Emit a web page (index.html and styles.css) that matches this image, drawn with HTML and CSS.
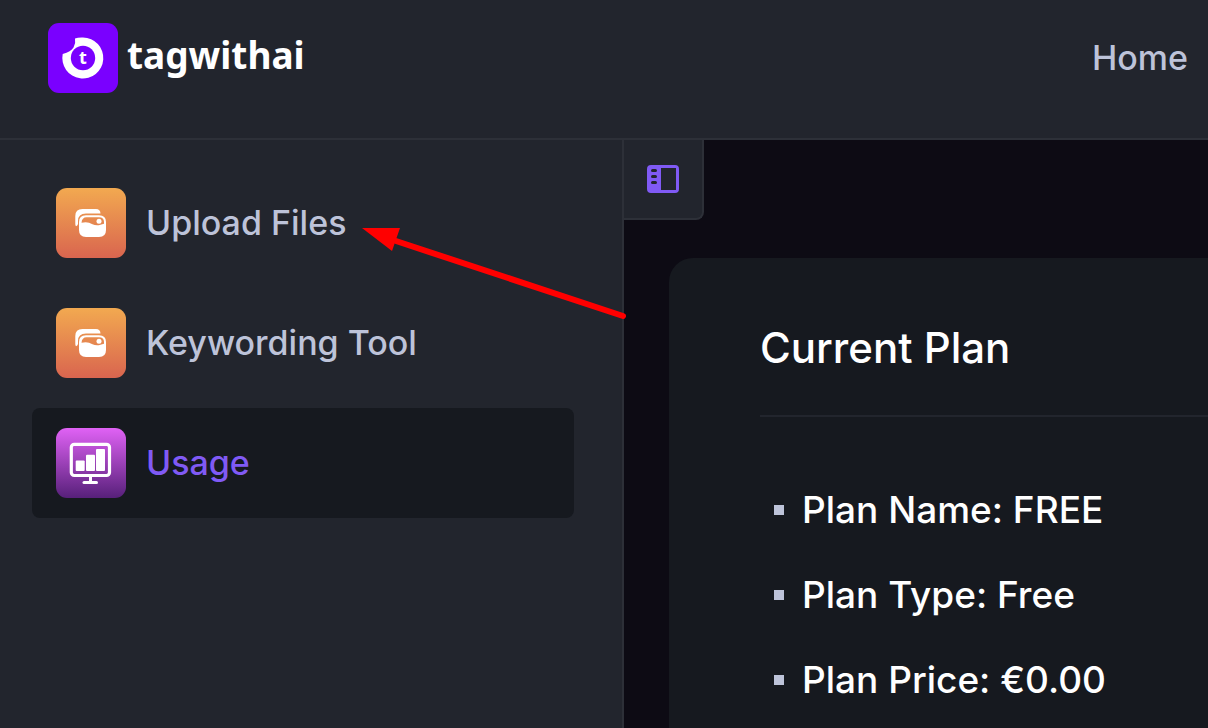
FILE: index.html
```html
<!DOCTYPE html>
<html lang="en">
  <head>
    <meta charset="utf-8" />
    <meta name="viewport" content="width=device-width, initial-scale=1" />
    <title>tagwithai - Usage</title>
    <link rel="stylesheet" href="styles.css">
  </head>
  <body>
    <header class="header">
      <a href="#" class="brand">
        <svg class="brand-logo" viewBox="0 0 70 70">
          <rect width="70" height="70" rx="11" fill="#7a00ff" />
          <path fill="#fff" d="M27 15.500Q30 14.300 35 14.500A20.500 20.500 0 1 1 14.700 31Q23 28.500 25.500 24.500Q28 20 27 15.500Z" />
          <circle cx="35" cy="35" r="12.200" fill="#7a00ff" />
          <text class="brand-letter" x="35" y="41" text-anchor="middle">t</text>
        </svg>
        <span class="brand-name">tagwithai</span>
      </a>
      <nav>
        <a href="#" class="nav-link">Home</a>
      </nav>
    </header>

    <div class="layout">
      <aside class="sidebar">
        <a href="#" class="menu-item">
          <svg class="menu-icon" viewBox="0 0 70 70">
            <defs>
              <linearGradient id="orange" x1="0" y1="0" x2="0" y2="1">
                <stop offset="0" stop-color="#f2a950" />
                <stop offset="1" stop-color="#d9654f" />
              </linearGradient>
            </defs>
            <rect width="70" height="70" rx="11" fill="url(#orange)" />
            <path fill="#fff" d="M20 38.200Q19.300 37.500 19.300 36V28Q19.300 21 26.500 21H40Q44.300 21 44.500 25.500H30Q22 25.500 22 33V36Q21.500 38 20 38.200Z" />
            <path fill="#fff" fill-rule="evenodd" d="M30 27.200H43Q50 27.200 50 34V42Q50 49 43 49H30Q23 49 23 42V34Q23 27.200 30 27.200ZM25.500 34.800C30 33.500 33 34.300 36.500 36.300C40 38 44 37.300 48 35.800V34Q48 29.300 43 29.300H30.500Q26 29.300 25.500 34.800Z" />
            <circle cx="43" cy="33.300" r="2.500" fill="#fff" />
          </svg>
          <span>Upload Files</span>
        </a>
        <a href="#" class="menu-item">
          <svg class="menu-icon" viewBox="0 0 70 70">
            <rect width="70" height="70" rx="11" fill="url(#orange)" />
            <path fill="#fff" d="M20 38.200Q19.300 37.500 19.300 36V28Q19.300 21 26.500 21H40Q44.300 21 44.500 25.500H30Q22 25.500 22 33V36Q21.500 38 20 38.200Z" />
            <path fill="#fff" fill-rule="evenodd" d="M30 27.200H43Q50 27.200 50 34V42Q50 49 43 49H30Q23 49 23 42V34Q23 27.200 30 27.200ZM25.500 34.800C30 33.500 33 34.300 36.500 36.300C40 38 44 37.300 48 35.800V34Q48 29.300 43 29.300H30.500Q26 29.300 25.500 34.800Z" />
            <circle cx="43" cy="33.300" r="2.500" fill="#fff" />
          </svg>
          <span>Keywording Tool</span>
        </a>
        <a href="#" class="menu-item active">
          <svg class="menu-icon" viewBox="0 0 70 70">
            <defs>
              <linearGradient id="violet" x1="0" y1="0" x2="0" y2="1">
                <stop offset="0" stop-color="#e062f5" />
                <stop offset="1" stop-color="#57207a" />
              </linearGradient>
            </defs>
            <rect width="70" height="70" rx="11" fill="url(#violet)" />
            <rect x="15.300" y="16.300" width="38.200" height="31.200" rx="3" fill="none" stroke="#fff" stroke-width="3.200" />
            <g fill="#fff">
              <rect x="19.700" y="32.500" width="9" height="10.500" rx="1" />
              <rect x="30" y="26.700" width="9" height="16.300" rx="1" />
              <rect x="40" y="21" width="9" height="22" rx="1" />
              <rect x="33" y="48" width="3" height="6" />
              <rect x="26.500" y="53" width="15.500" height="3" rx="1.500" />
            </g>
          </svg>
          <span>Usage</span>
        </a>
        <!-- pointer to the upload link -->
        <svg class="arrow" viewBox="0 0 266 92">
          <path d="M34 13L261 88" stroke="#f00" stroke-width="6" stroke-linecap="round" />
          <path d="M0 0H38L30 23Z" fill="#f00" />
        </svg>
      </aside>

      <main class="content">
        <button type="button" class="toggle" aria-label="Toggle sidebar">
          <svg width="32" height="28" viewBox="0 0 32 28">
            <path fill="#805af5" fill-rule="evenodd" d="M4 0H28Q32 0 32 4V24Q32 28 28 28H4Q0 28 0 24V4Q0 0 4 0ZM14 3V25H29V3Z" />
            <path stroke="#22252d" stroke-width="3" stroke-linecap="round" d="M5.500 5.500H8.500M5.500 11.500H8.500M5.500 17.500H8.500" />
          </svg>
        </button>
        <section class="card">
          <h1 class="card-title">Current Plan</h1>
          <ul class="plan">
            <li>Plan Name: FREE</li>
            <li>Plan Type: Free</li>
            <li>Plan Price: €0.00</li>
          </ul>
        </section>
      </main>
    </div>
  </body>
</html>
```
FILE: styles.css
```css
* {
  box-sizing: border-box;
}

body {
  margin: 0;
  min-height: 100vh;
  display: flex;
  flex-direction: column;
  overflow: hidden;
  background: #0d0b14;
  color: #bdc3d9;
  font-family: Inter, sans-serif;
  font-weight: 500;
}

a {
  color: inherit;
  text-decoration: none;
}

.header {
  display: flex;
  justify-content: space-between;
  align-items: center;
  padding: 23px 20px 45px 48px;
  background: #22252d;
  border-bottom: 2px solid #2d3038;
}

.brand {
  display: flex;
  gap: 9px;
}

.brand-logo,
.menu-icon {
  width: 70px;
  height: 70px;
  flex: none;
}

.brand-letter {
  fill: #fff;
  font: bold 18px "Noto Sans", sans-serif;
}

.brand-name {
  color: #fff;
  font: bold 37px/64px "Noto Sans", sans-serif;
}

.nav-link {
  font-size: 34px;
  line-height: 40px;
}

.layout {
  flex: 1;
  display: flex;
}

.sidebar {
  position: relative;
  flex: none;
  width: 624px;
  padding: 28px 48px 28px 32px;
  display: flex;
  flex-direction: column;
  gap: 10px;
  background: #22252d;
  border-right: 2px solid #2d3038;
}

.menu-item {
  display: flex;
  align-items: center;
  gap: 20px;
  padding: 20px 24px;
  border-radius: 8px;
  font-size: 34px;
  line-height: 40px;
}

.menu-item.active {
  background: #16191f;
  color: #805af5;
}

.arrow {
  position: absolute;
  top: 88px;
  left: 362px;
  width: 266px;
  height: 92px;
  z-index: 1;
}

.content {
  flex: 1;
  min-width: 0;
  display: flex;
  flex-direction: column;
}

.toggle {
  display: flex;
  align-items: center;
  justify-content: center;
  width: 80px;
  height: 80px;
  padding: 0;
  background: #22252d;
  border: 0 solid #2d3038;
  border-width: 0 2px 2px 0;
  border-radius: 0 0 8px 0;
}

.card {
  flex: 1;
  margin: 38px 0 0 45px;
  padding: 60px 0 0 91px;
  background: #16191f;
  border-radius: 24px 0 0 0;
  color: #fff;
}

.card-title {
  margin: 0;
  padding-bottom: 37px;
  border-bottom: 2px solid #22252d;
  font-size: 42px;
  font-weight: 500;
  line-height: 60px;
}

/* three rows are taller than what is left of a short window */
.plan {
  display: flex;
  flex-direction: column;
  gap: 29px;
  margin: 0;
  padding: 65px 0 0 14px;
  list-style: none;
  font-size: 37px;
  line-height: 56px;
}

.plan li {
  display: flex;
  align-items: center;
  gap: 18px;
}

.plan li::before {
  content: "";
  width: 10px;
  height: 10px;
  background: #bdc3d9;
}
```
